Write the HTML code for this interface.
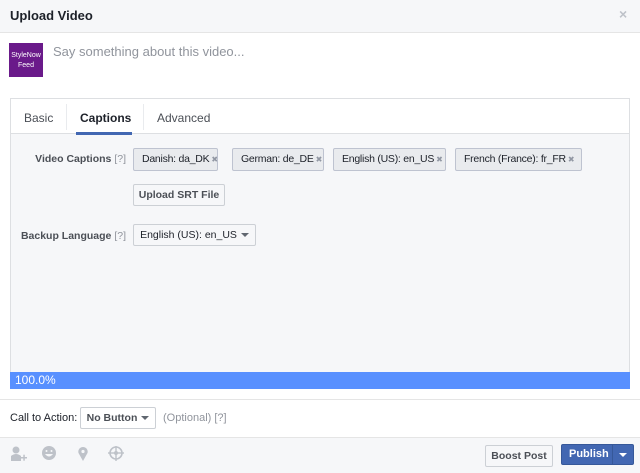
<!DOCTYPE html>
<html><head><style>
*{box-sizing:border-box;margin:0;padding:0}
body{width:640px;height:473px;overflow:hidden;background:#fff;font-family:"Liberation Sans",Arial,sans-serif;font-size:12px;color:#1d2129;position:relative}
.a{position:absolute;white-space:nowrap}
.tag{position:absolute;white-space:nowrap;top:148px;height:23px;border:1px solid #bec3d0;background:#e9ebee;border-radius:2px;font-size:10.5px;letter-spacing:-0.25px;line-height:21px;padding-left:8px;color:#1d2129;overflow:hidden}
.tag i{font-style:normal;color:#9197a3;font-size:8px;margin-left:2px}
.btn{position:absolute;white-space:nowrap;border:1px solid #ccd0d5;background:#f6f7f9;border-radius:2px;font-weight:bold;font-size:10.5px;color:#4b4f56;text-align:center}
.lbl{position:absolute;white-space:nowrap;font-weight:bold;font-size:10.5px;color:#4b4f56;text-align:right;width:126px;left:0}
.lbl span{font-weight:normal;color:#90949c}
.car{display:inline-block;width:0;height:0;border-left:4px solid transparent;border-right:4px solid transparent;border-top:4px solid #606770;vertical-align:middle;margin-left:4px}
</style></head><body>
<div class="a" style="left:0;top:0;width:640px;height:33px;background:#f6f7f9;border-bottom:1px solid #e5e5e5"></div>
<div class="a" style="left:10px;top:8px;font-weight:bold;font-size:13px">Upload Video</div>
<div class="a" style="left:619px;top:6px;color:#bec2c9;font-size:14px;font-weight:bold">×</div>
<div class="a" style="left:9px;top:43px;width:34px;height:34px;background:#6a1a8a;color:#fff;font-size:7px;text-align:center;line-height:10px;padding-top:8px">StyleNow<br>Feed</div>
<div class="a" style="left:53px;top:44px;color:#90949c;font-size:13px">Say something about this video...</div>
<div class="a" style="left:10px;top:98px;width:620px;height:290px;background:#f6f7f9;border:1px solid #dddfe2"></div>
<div class="a" style="left:11px;top:99px;width:618px;height:35px;background:#fff;border-bottom:1px solid #dddfe2"></div>
<div class="a" style="left:66px;top:104px;width:1px;height:26px;background:#e9ebee"></div>
<div class="a" style="left:143px;top:104px;width:1px;height:26px;background:#e9ebee"></div>
<div class="a" style="left:24px;top:111px;font-size:12px;color:#4b4f56">Basic</div>
<div class="a" style="left:80px;top:111px;font-size:12px;font-weight:bold">Captions</div>
<div class="a" style="left:76px;top:132px;width:56px;height:3px;background:#4267b2"></div>
<div class="a" style="left:157px;top:111px;font-size:12px;color:#4b4f56">Advanced</div>
<div class="lbl" style="top:153px">Video Captions <span>[?]</span></div>
<div class="tag" style="left:133px;width:85px">Danish: da_DK<i>✖</i></div>
<div class="tag" style="left:232px;width:92px">German: de_DE<i>✖</i></div>
<div class="tag" style="left:333px;width:113px">English (US): en_US<i>✖</i></div>
<div class="tag" style="left:455px;width:127px">French (France): fr_FR<i>✖</i></div>
<div class="btn" style="left:133px;top:184px;width:92px;height:22px;line-height:20px">Upload SRT File</div>
<div class="lbl" style="top:230px">Backup Language <span>[?]</span></div>
<div class="btn" style="left:133px;top:224px;width:123px;height:22px;line-height:20px;font-weight:normal;color:#1d2129;background:#f6f7f9">English (US): en_US<span class="car"></span></div>
<div class="a" style="left:10px;top:372px;width:620px;height:17px;background:#5890ff;color:#fff;font-size:12px;line-height:17px;padding-left:5px">100.0%</div>
<div class="a" style="left:0;top:399px;width:640px;height:1px;background:#e5e5e5"></div>
<div class="a" style="left:10px;top:412px;font-size:11px">Call to Action:</div>
<div class="btn" style="left:80px;top:407px;width:76px;height:22px;line-height:20px;background:#fff;color:#4b4f56">No Button<span class="car"></span></div>
<div class="a" style="left:163px;top:412px;font-size:11px;color:#90949c">(Optional) [?]</div>
<div class="a" style="left:0;top:437px;width:640px;height:36px;background:#f6f7f9;border-top:1px solid #e5e5e5"></div>
<svg class="a" style="left:8px;top:446px" width="120" height="18" fill="#bec2c9">
<circle cx="8" cy="4" r="3.5"/><path d="M3 15 L3 10 Q8 6 13 10 L13 15Z"/><rect x="13" y="11" width="6" height="1.5"/><rect x="15.3" y="8.7" width="1.5" height="6"/>
<circle cx="41" cy="7" r="7"/><circle cx="38.5" cy="5" r="1" fill="#f6f7f9"/><circle cx="43.5" cy="5" r="1" fill="#f6f7f9"/><path d="M37 8 Q41 13 45 8Z" fill="#f6f7f9"/>
<path d="M75 15 L70.5 7 A4.7 4.7 0 1 1 79.5 7Z"/><circle cx="75" cy="5.5" r="1.6" fill="#f6f7f9"/>
<circle cx="108" cy="7" r="6" fill="none" stroke="#bec2c9" stroke-width="1.6"/><circle cx="108" cy="7" r="2"/><rect x="107.3" y="-1" width="1.4" height="16"/><rect x="100" y="6.3" width="16" height="1.4"/>
</svg>
<div class="btn" style="left:485px;top:445px;width:68px;height:22px;line-height:20px;background:#f6f7f9;color:#4b4f56">Boost Post</div>
<div class="a" style="left:561px;top:444px;width:73px;height:21px;background:#4267b2;border:1px solid #365899;border-radius:2px;color:#fff;font-weight:bold;font-size:11px;line-height:19px;padding-left:7px">Publish</div>
<div class="a" style="left:612px;top:445px;width:1px;height:19px;background:#365899"></div>
<div class="a" style="left:619px;top:453px;border-left:4px solid transparent;border-right:4px solid transparent;border-top:4px solid #fff"></div>
</body></html>
